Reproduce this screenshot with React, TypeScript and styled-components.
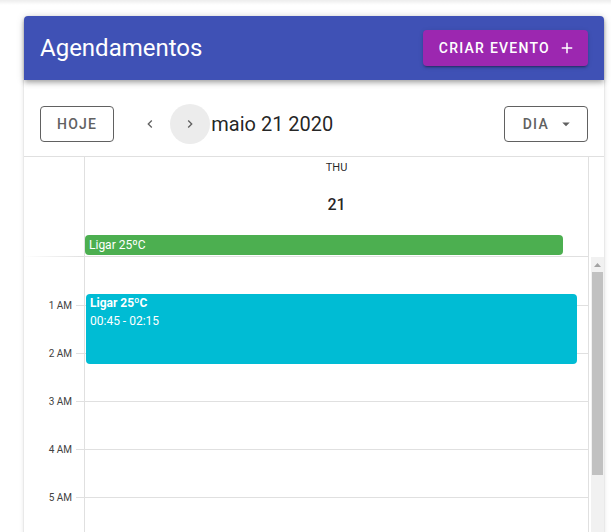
import React from 'react'
import styled, { createGlobalStyle } from 'styled-components'

const GlobalStyle = createGlobalStyle`
  html, body {
    margin: 0;
    padding: 0;
    overflow: hidden;
    background: #fff;
  }
  body {
    font-family: Roboto, "Noto Sans", Arial, sans-serif;
    -webkit-font-smoothing: antialiased;
  }
  * { box-sizing: border-box; }
`

const HOUR = 48

// only the hours that fit in the visible part of the day view
const hours = Array.from({ length: 6 }, (_, i) => i)

const hourLabel = (h: number) => `${h % 12 || 12} ${h < 12 ? 'AM' : 'PM'}`

const ChevronLeft = () => (
  <svg width="16" height="16" viewBox="0 0 24 24">
    <path fill="currentColor" d="M15.41,16.58L10.83,12L15.41,7.41L14,6L8,12L14,18L15.41,16.58Z" />
  </svg>
)

const ChevronRight = () => (
  <svg width="16" height="16" viewBox="0 0 24 24">
    <path fill="currentColor" d="M8.59,16.58L13.17,12L8.59,7.41L10,6L16,12L10,18L8.59,16.58Z" />
  </svg>
)

const MenuDown = () => (
  <svg width="18" height="18" viewBox="0 0 24 24">
    <path fill="currentColor" d="M7,10L12,15L17,10H7Z" />
  </svg>
)

const Plus = () => (
  <svg width="18" height="18" viewBox="0 0 24 24">
    <path fill="currentColor" d="M19,13H13V19H11V13H5V11H11V5H13V11H19V13Z" />
  </svg>
)

const ArrowUp = () => (
  <svg width="7" height="4" viewBox="0 0 7 4">
    <path fill="#a3a3a3" d="M3.5,0L7,4H0Z" />
  </svg>
)

const App = () => {
  return (
    <>
      <GlobalStyle />
      <Page>
        <Card>
          <AppBar>
            <AppTitle>Agendamentos</AppTitle>
            <CreateButton>
              CRIAR EVENTO
              <IconRight><Plus /></IconRight>
            </CreateButton>
          </AppBar>

          <Toolbar>
            <OutlinedButton>Hoje</OutlinedButton>
            <NavButton>
              <ChevronLeft />
            </NavButton>
            <NavButton $focused>
              <ChevronRight />
            </NavButton>
            <ToolbarTitle>maio 21 2020</ToolbarTitle>
            <Spacer />
            <OutlinedButton $padLeft={18}>
              Dia
              <IconRight><MenuDown /></IconRight>
            </OutlinedButton>
          </Toolbar>

          <Calendar>
            <Head>
              <IntervalsHead />
              <DayHead>
                <Weekday>Thu</Weekday>
                <DayLabel>21</DayLabel>
                <AllDayEvent>Ligar 25ºC</AllDayEvent>
              </DayHead>
            </Head>

            <Body>
              <IntervalsBody>
                {hours.map((h) => (
                  <Interval key={h} $first={h === 0}>
                    {h > 0 && <IntervalText>{hourLabel(h)}</IntervalText>}
                  </Interval>
                ))}
              </IntervalsBody>
              <DayBody>
                {hours.map((h) => (
                  <DayInterval key={h} $first={h === 0} />
                ))}
                <TimedEvent style={{ top: 0.75 * HOUR + 1, height: 1.5 * HOUR - 2 }}>
                  <strong>Ligar 25ºC</strong>
                  <span>00:45 - 02:15</span>
                </TimedEvent>
              </DayBody>
              <ScrollTrack>
                <ScrollArrow>
                  <ArrowUp />
                </ScrollArrow>
                <ScrollThumb />
              </ScrollTrack>
            </Body>
          </Calendar>
        </Card>
      </Page>
    </>
  )
}

export default App

const Page = styled.div`
  width: 611px;
  height: 532px;
  overflow: hidden;
  padding: 16px 7px 0 24px;
  background: linear-gradient(to bottom, rgba(0, 0, 0, 0.07), rgba(0, 0, 0, 0) 5px);
`

const Card = styled.div`
  width: 580px;
  background: #fff;
  border-radius: 4px;
  box-shadow: 0 3px 1px -2px rgba(0, 0, 0, 0.2), 0 2px 2px 0 rgba(0, 0, 0, 0.14),
    0 1px 5px 0 rgba(0, 0, 0, 0.12);
`

const AppBar = styled.div`
  height: 64px;
  padding: 0 16px;
  display: flex;
  align-items: center;
  justify-content: space-between;
  background-color: #3f51b5;
  border-radius: 4px 4px 0 0;
  position: relative;
  z-index: 1;
  box-shadow: 0 2px 4px -1px rgba(0, 0, 0, 0.2), 0 4px 5px 0 rgba(0, 0, 0, 0.14),
    0 1px 10px 0 rgba(0, 0, 0, 0.12);
`

const AppTitle = styled.div`
  color: #fff;
  font-size: 24px;
  font-weight: 400;
  line-height: 32px;
`

const BaseButton = styled.button`
  height: 36px;
  padding: 0 16px;
  display: inline-flex;
  align-items: center;
  justify-content: center;
  border-radius: 4px;
  font-family: Roboto, "Noto Sans", Arial, sans-serif;
  font-size: 14px;
  font-weight: 500;
  letter-spacing: 0.0892857em;
  text-transform: uppercase;
  cursor: pointer;
`

const CreateButton = styled(BaseButton)`
  border: none;
  color: #fff;
  background-color: #9c27b0;
  box-shadow: 0 3px 1px -2px rgba(0, 0, 0, 0.2), 0 2px 2px 0 rgba(0, 0, 0, 0.14),
    0 1px 5px 0 rgba(0, 0, 0, 0.12);
`

const OutlinedButton = styled(BaseButton)<{ $padLeft?: number }>`
  border: 1px solid #616161;
  color: #616161;
  background: transparent;
  margin-right: 16px;
  padding-left: ${(p) => p.$padLeft ?? 16}px;
  &:last-child {
    margin-right: 0;
  }
`

const IconRight = styled.span`
  display: inline-flex;
  margin-left: 8px;
  margin-right: -4px;
`

const Toolbar = styled.div`
  height: 64px;
  margin-top: 12px;
  padding: 0 16px;
  display: flex;
  align-items: center;
`

const NavButton = styled.button<{ $focused?: boolean }>`
  width: 40px;
  height: 40px;
  border: none;
  border-radius: 50%;
  padding: 0;
  display: inline-flex;
  align-items: center;
  justify-content: center;
  color: #616161;
  background-color: ${(p) => (p.$focused ? 'rgba(97, 97, 97, 0.12)' : 'transparent')};
  cursor: pointer;
`

const ToolbarTitle = styled.div`
  margin-left: 1px;
  font-size: 20px;
  line-height: 1.5;
  color: rgba(0, 0, 0, 0.87);
`

const Spacer = styled.div`
  flex: 1;
`

const Calendar = styled.div`
  border-top: 1px solid #e0e0e0;
`

const Head = styled.div`
  display: flex;
`

const IntervalsHead = styled.div`
  width: 60px;
  flex: none;
  position: relative;
  &::after {
    content: '';
    position: absolute;
    left: 0;
    right: 0;
    bottom: 0;
    height: 1px;
    background: linear-gradient(90deg, rgba(224, 224, 224, 0), #e0e0e0);
  }
`

const DayHead = styled.div`
  flex: 1;
  margin-right: 15px;
  padding-top: 4px;
  display: flex;
  flex-direction: column;
  align-items: center;
  border-left: 1px solid #e0e0e0;
  border-right: 1px solid #e0e0e0;
  border-bottom: 1px solid #e0e0e0;
`

const Weekday = styled.div`
  font-size: 11px;
  line-height: 14px;
  text-transform: uppercase;
  color: rgba(0, 0, 0, 0.87);
`

const DayLabel = styled.div`
  width: 40px;
  height: 40px;
  margin-top: 9px;
  display: flex;
  align-items: center;
  justify-content: center;
  font-size: 16px;
  font-weight: 500;
  color: rgba(0, 0, 0, 0.87);
`

const AllDayEvent = styled.div`
  align-self: flex-start;
  width: 95%;
  height: 20px;
  margin: 11px 0 1px;
  padding: 0 4px;
  border-radius: 4px;
  background-color: #4caf50;
  color: #fff;
  font-size: 12px;
  line-height: 20px;
  white-space: nowrap;
  overflow: hidden;
`

const Body = styled.div`
  height: 300px;
  overflow: hidden;
  display: flex;
`

const IntervalsBody = styled.div`
  width: 61px;
  flex: none;
  border-right: 1px solid #e0e0e0;
`

const Interval = styled.div<{ $first?: boolean }>`
  height: ${HOUR}px;
  position: relative;
  &::after {
    content: '';
    display: ${(p) => (p.$first ? 'none' : 'block')};
    position: absolute;
    top: 0;
    right: 0;
    width: 8px;
    border-top: 1px solid #e0e0e0;
  }
`

const IntervalText = styled.div`
  padding-right: 12px;
  text-align: right;
  font-size: 10px;
  line-height: 12px;
  color: #424242;
  transform: translateY(-5px);
`

const DayBody = styled.div`
  flex: 1;
  position: relative;
  border-right: 1px solid #e0e0e0;
`

const DayInterval = styled.div<{ $first?: boolean }>`
  height: ${HOUR}px;
  border-top: ${(p) => (p.$first ? 'none' : '1px solid #e0e0e0')};
`

const TimedEvent = styled.div`
  position: absolute;
  left: 1px;
  right: 11px;
  padding: 0 4px;
  display: flex;
  flex-direction: column;
  border-radius: 4px;
  background-color: #00bcd4;
  color: #fff;
  font-size: 12px;
  line-height: 18px;
  strong {
    font-weight: 700;
  }
`

const ScrollTrack = styled.div`
  width: 15px;
  flex: none;
  border-left: 2px solid #fff;
  background-color: #f1f1f1;
  display: flex;
  flex-direction: column;
  align-items: center;
`

const ScrollArrow = styled.div`
  width: 100%;
  height: 15px;
  flex: none;
  display: flex;
  align-items: center;
  justify-content: center;
`

const ScrollThumb = styled.div`
  width: 11px;
  height: 203px;
  flex: none;
  background-color: #c1c1c1;
`
